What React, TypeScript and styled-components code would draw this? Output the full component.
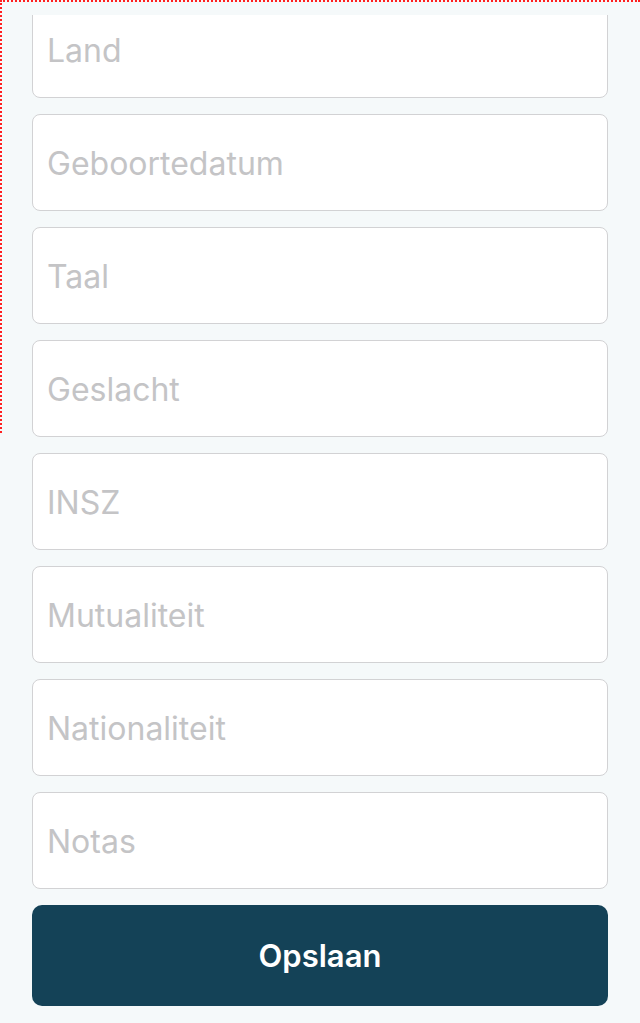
import React, { useLayoutEffect, useRef } from "react";
import styled, { createGlobalStyle } from "styled-components";

const fields = [
  "Land",
  "Geboortedatum",
  "Taal",
  "Geslacht",
  "INSZ",
  "Mutualiteit",
  "Nationaliteit",
  "Notas",
];

const App = () => {
  const scrollRef = useRef<HTMLDivElement>(null);

  // het formulier staat een klein stukje naar beneden gescrold
  useLayoutEffect(() => {
    if (scrollRef.current) scrollRef.current.scrollTop = 14;
  }, []);

  return (
    <SPage>
      <GlobalStyle />
      <SDebugOutline />
      <STopBar />
      <SScroller ref={scrollRef}>
        <SForm onSubmit={e => e.preventDefault()}>
          {fields.map(name => (
            <SInput key={name} placeholder={name} />
          ))}
          <SSaveButton type="submit">Opslaan</SSaveButton>
        </SForm>
      </SScroller>
    </SPage>
  );
};

export default App;

const GlobalStyle = createGlobalStyle`
  html, body {
    margin: 0;
    padding: 0;
    background: #f5f9fa;
    font-family: Inter, "Liberation Sans", Arial, sans-serif;
  }
  * {
    box-sizing: border-box;
  }
`;

const SPage = styled.div`
  position: relative;
  width: 100%;
  height: 1023px;
  display: flex;
  flex-direction: column;
  background: #f5f9fa;
  overflow: hidden;
`;

const SDebugOutline = styled.div`
  position: absolute;
  top: 0;
  left: 0;
  width: 100%;
  height: 433px;
  border-top: 2px dotted #ff2020;
  border-left: 2px dotted #ff2020;
  pointer-events: none;
  z-index: 2;
`;

const STopBar = styled.div`
  height: 15px;
  flex-shrink: 0;
`;

const SScroller = styled.div`
  flex: 1;
  overflow-y: auto;
  scrollbar-width: none;
  &::-webkit-scrollbar {
    display: none;
  }
`;

const SForm = styled.form`
  display: flex;
  flex-direction: column;
  gap: 16px;
  padding: 0 32px 24px;
`;

const SInput = styled.input`
  width: 100%;
  height: 97px;
  padding: 2px 14px 0;
  border: 1px solid #d2d2d4;
  border-radius: 8px;
  background: #ffffff;
  font-family: Inter, "Liberation Sans", Arial, sans-serif;
  font-size: 32px;
  color: #333333;
  outline: none;

  &::placeholder {
    color: #c4c4c6;
  }
`;

const SSaveButton = styled.button`
  width: 100%;
  height: 101px;
  border: none;
  border-radius: 10px;
  background: #144257;
  color: #ffffff;
  font-family: Inter, "Liberation Sans", Arial, sans-serif;
  font-size: 31px;
  font-weight: 600;
  cursor: pointer;
`;
